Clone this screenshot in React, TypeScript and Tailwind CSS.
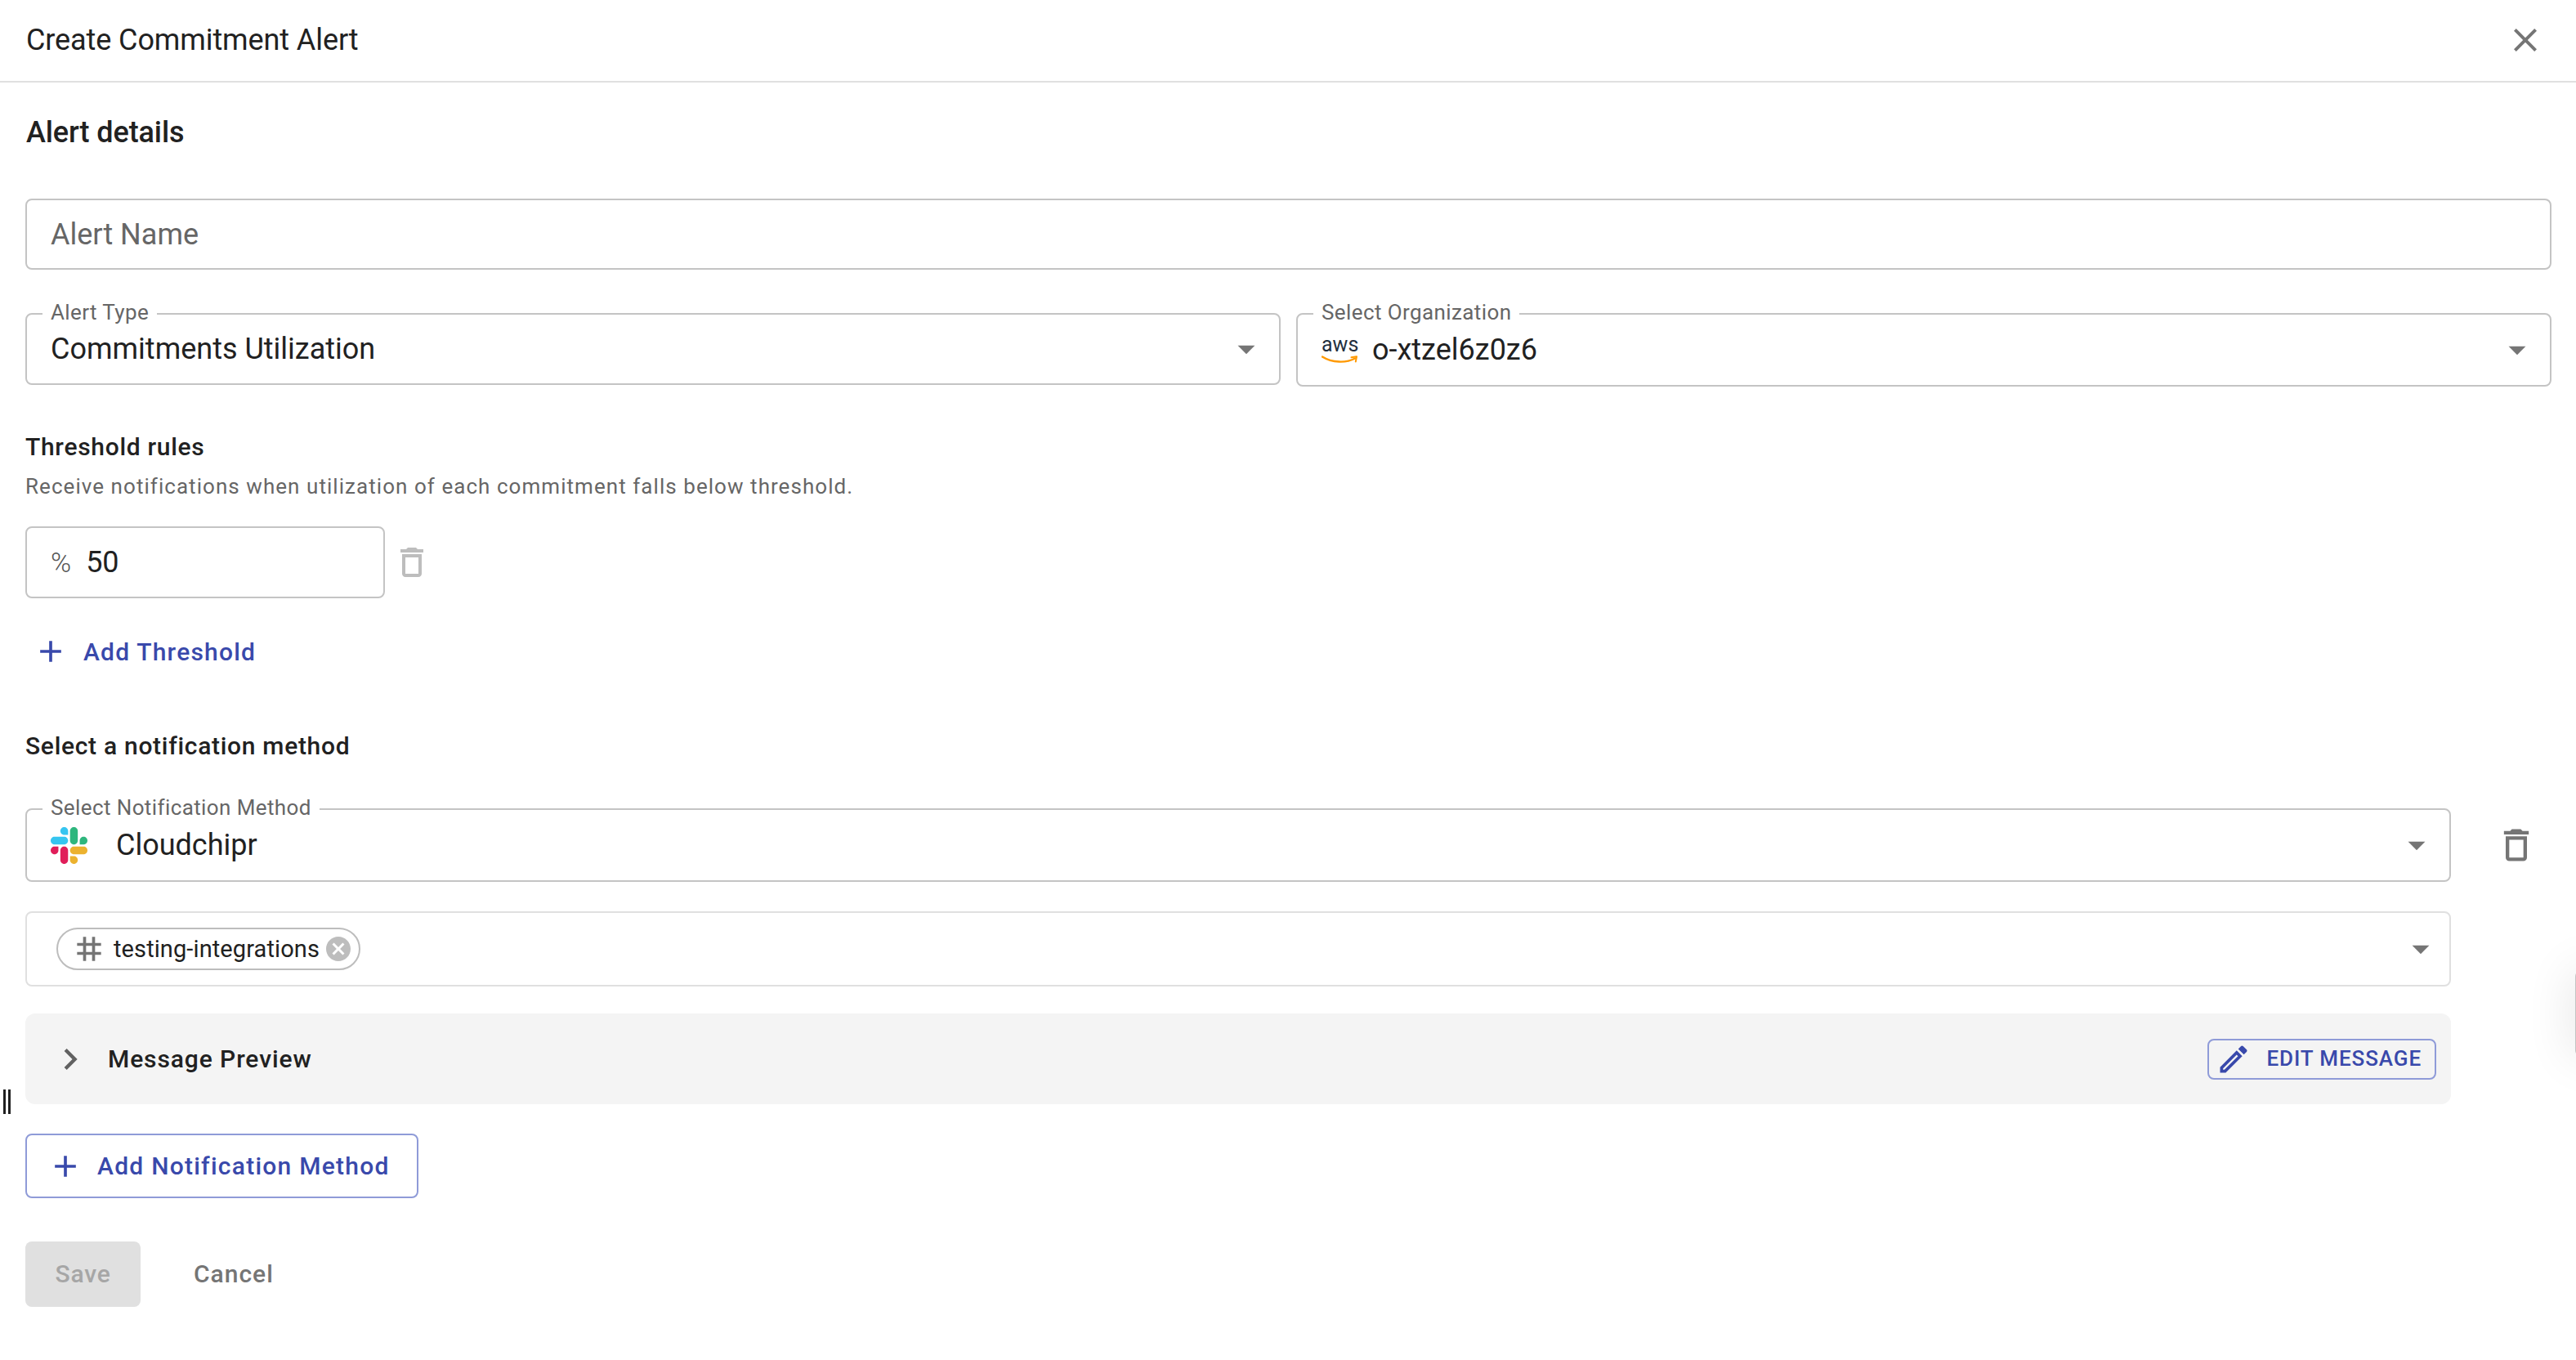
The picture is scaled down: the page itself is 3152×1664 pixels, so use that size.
import type { ReactNode } from 'react';

const icons = {
  close: 'M19 6.41 17.59 5 12 10.59 6.41 5 5 6.41 10.59 12 5 17.59 6.41 19 12 13.41 17.59 19 19 17.59 13.41 12z',
  trash: 'M6 19c0 1.1.9 2 2 2h8c1.1 0 2-.9 2-2V7H6v12zM8 9h8v10H8V9zm7.5-5-1-1h-5l-1 1H5v2h14V4h-3.5z',
  drop: 'm7 10 5 5 5-5z',
  add: 'M19 13h-6v6h-2v-6H5v-2h6V5h2v6h6v2z',
  edit: 'M3 17.25V21h3.75L17.81 9.94l-3.75-3.75L3 17.25zM5.92 19H5v-.92l9.06-9.06.92.92L5.92 19zM20.71 5.63l-2.34-2.34c-.2-.2-.45-.29-.71-.29s-.51.1-.7.29l-1.83 1.83 3.75 3.75 1.83-1.83c.39-.39.39-1.02 0-1.41z',
  chevron: 'M10 6 8.59 7.41 13.17 12l-4.58 4.59L10 18l6-6z',
  tag: 'M20 10V8h-4V4h-2v4h-4V4H8v4H4v2h4v4H4v2h4v4h2v-4h4v4h2v-4h4v-2h-4v-4h4zm-6 4h-4v-4h4v4z',
  cancel: 'M12 2C6.47 2 2 6.47 2 12s4.47 10 10 10 10-4.47 10-10S17.53 2 12 2zm5 13.59L15.59 17 12 13.41 8.41 17 7 15.59 10.59 12 7 8.41 8.41 7 12 10.59 15.59 7 17 8.41 13.41 12 17 15.59z',
};

function Icon({ name, className }: { name: keyof typeof icons; className: string }) {
  return (
    <svg viewBox="0 0 24 24" fill="currentColor" className={className}>
      <path d={icons[name]} />
    </svg>
  );
}

function SlackLogo() {
  return (
    <svg viewBox="0 0 122.8 122.8" className="w-[45px] h-[45px] shrink-0">
      <path d="M25.8 77.6c0 7.1-5.8 12.9-12.9 12.9S0 84.7 0 77.6s5.8-12.9 12.9-12.9h12.9v12.9z" fill="#e01e5a" />
      <path d="M32.3 77.6c0-7.1 5.8-12.9 12.9-12.9s12.9 5.8 12.9 12.9v32.3c0 7.1-5.8 12.9-12.9 12.9s-12.9-5.8-12.9-12.9V77.6z" fill="#e01e5a" />
      <path d="M45.2 25.8c-7.1 0-12.9-5.8-12.9-12.9S38.1 0 45.2 0s12.9 5.8 12.9 12.9v12.9H45.2z" fill="#36c5f0" />
      <path d="M45.2 32.3c7.1 0 12.9 5.8 12.9 12.9s-5.8 12.9-12.9 12.9H12.9C5.8 58.1 0 52.3 0 45.2s5.8-12.9 12.9-12.9h32.3z" fill="#36c5f0" />
      <path d="M97 45.2c0-7.1 5.8-12.9 12.9-12.9s12.9 5.8 12.9 12.9-5.8 12.9-12.9 12.9H97V45.2z" fill="#2eb67d" />
      <path d="M90.5 45.2c0 7.1-5.8 12.9-12.9 12.9s-12.9-5.8-12.9-12.9V12.9C64.7 5.8 70.5 0 77.6 0s12.9 5.8 12.9 12.9v32.3z" fill="#2eb67d" />
      <path d="M77.6 97c7.1 0 12.9 5.8 12.9 12.9s-5.8 12.9-12.9 12.9-12.9-5.8-12.9-12.9V97h12.9z" fill="#ecb22e" />
      <path d="M77.6 90.5c-7.1 0-12.9-5.8-12.9-12.9s5.8-12.9 12.9-12.9h32.3c7.1 0 12.9 5.8 12.9 12.9s-5.8 12.9-12.9 12.9H77.6z" fill="#ecb22e" />
    </svg>
  );
}

function AwsLogo() {
  return (
    <div className="relative w-[44px] h-[30px] shrink-0">
      <span className="absolute left-0 top-[-6px] text-[25px] leading-[30px] font-normal text-[#232f3e]">aws</span>
      <svg viewBox="0 0 44 12" className="absolute left-0 bottom-[-3px] w-[44px] h-[12px]" fill="none">
        <path d="M1 2.5C13 10 30 10.5 41 4.5" stroke="#f90" strokeWidth="2.4" strokeLinecap="round" />
        <path d="M36.5 3.2L43 2.2 41.8 8.5" stroke="#f90" strokeWidth="2" strokeLinecap="round" strokeLinejoin="round" />
      </svg>
    </div>
  );
}

function OutlinedSelect({
  label,
  value,
  className,
  arrowClass = 'right-[15px]',
}: {
  label: string;
  value: ReactNode;
  className: string;
  arrowClass?: string;
}) {
  return (
    <div className={`relative flex items-center border-2 border-[#c4c4c4] rounded-[8px] pl-[29px] bg-white ${className}`}>
      <span className="absolute left-[19px] top-[-17px] bg-white px-[10px] text-[26px] leading-[28px] tracking-[0.4px] text-[#666666]">
        {label}
      </span>
      {value}
      <Icon name="drop" className={`absolute top-1/2 -translate-y-1/2 w-[50px] h-[50px] text-[#757575] ${arrowClass}`} />
    </div>
  );
}

export default function App() {
  return (
    <div className="relative w-[3152px] h-[1664px] overflow-hidden bg-white text-[#212121] font-['Roboto',sans-serif]">
      {/* dialog header */}
      <header className="flex items-center justify-between h-[101px] border-b-2 border-[#e0e0e0] pl-[32px] pr-[38px] pb-[2px]">
        <h1 className="text-[36px] leading-[48px] font-normal tracking-[-0.1px]">Create Commitment Alert</h1>
        <Icon name="close" className="w-[48px] h-[48px] text-[#757575]" />
      </header>

      <main className="pl-[31px] pr-[30px]">
        <h2 className="mt-[38px] ml-[1px] text-[36px] leading-[46px] font-medium tracking-[-0.1px]">Alert details</h2>

        <div className="mt-[58px] flex items-center h-[87px] border-2 border-[#c4c4c4] rounded-[8px] pl-[29px] text-[36px] text-[#666666]">
          Alert Name
        </div>

        <div className="mt-[53px] flex gap-[19px] items-start">
          <OutlinedSelect
            label="Alert Type"
            className="flex-1 h-[88px]"
            value={<span className="text-[36px]">Commitments Utilization</span>}
          />
          <OutlinedSelect
            label="Select Organization"
            className="flex-1 h-[90px]"
            value={
              <div className="flex items-center gap-[18px]">
                <AwsLogo />
                <span className="text-[36px]">o-xtzel6z0z6</span>
              </div>
            }
          />
        </div>

        <h3 className="mt-[55px] text-[30px] leading-[38px] font-medium tracking-[0.7px]">Threshold rules</h3>
        <p className="mt-[11px] text-[26px] leading-[36px] tracking-[1.05px] text-[#666666]">
          Receive notifications when utilization of each commitment falls below threshold.
        </p>

        <div className="mt-[31px] flex items-center gap-[9px]">
          <div className="flex items-center w-[440px] h-[88px] border-2 border-[#c4c4c4] rounded-[8px] pl-[29px] gap-[18px]">
            <span className="text-[34px] font-light text-[#555555]">%</span>
            <span className="text-[36px]">50</span>
          </div>
          <Icon name="trash" className="w-[48px] h-[48px] text-[#bdbdbd]" />
        </div>

        <button className="mt-[42px] flex items-center gap-[18px] pl-[9px] h-[46px] text-[#3949ab] text-[30px] font-medium tracking-[1.2px]">
          <Icon name="add" className="w-[44px] h-[44px]" />
          Add Threshold
        </button>

        <h3 className="mt-[74px] text-[30px] leading-[38px] font-medium tracking-[0.7px]">Select a notification method</h3>

        <div className="mt-[57px] flex items-center">
          <OutlinedSelect
            label="Select Notification Method"
            className="w-[2968px] h-[90px]"
            value={
              <div className="flex items-center gap-[35px]">
                <SlackLogo />
                <span className="text-[36px]">Cloudchipr</span>
              </div>
            }
          />
          <Icon name="trash" className="ml-[54px] w-[52px] h-[52px] text-[#757575]" />
        </div>

        <div className="relative mt-[36px] flex items-center w-[2968px] h-[92px] border-2 border-[#e0e0e0] rounded-[8px] pl-[36px]">
          <div className="flex items-center h-[52px] border-2 border-[#bdbdbd] rounded-full pl-[16px] pr-[7px]">
            <Icon name="tag" className="w-[44px] h-[44px] text-[#757575]" />
            <span className="ml-[8px] text-[29px] leading-[40px] tracking-[0.1px]">testing-integrations</span>
            <Icon name="cancel" className="ml-[5px] w-[36px] h-[36px] text-[#bdbdbd]" />
          </div>
          <Icon name="drop" className="absolute right-[10px] top-1/2 -translate-y-1/2 w-[50px] h-[50px] text-[#757575]" />
        </div>

        <div className="mt-[33px] flex items-center justify-between w-[2968px] h-[111px] bg-[#f4f4f4] rounded-[12px] pl-[29px] pr-[18px]">
          <div className="flex items-center gap-[20px]">
            <Icon name="chevron" className="w-[52px] h-[52px] text-[#616161]" />
            <span className="text-[30px] font-medium tracking-[0.9px]">Message Preview</span>
          </div>
          <button className="flex items-center h-[50px] border-2 border-[#8f9bd8] rounded-[8px] pl-[8px] pr-[16px] gap-[18px] text-[#3949ab] text-[26px] font-medium tracking-[0.9px]">
            <Icon name="edit" className="w-[44px] h-[44px]" />
            EDIT MESSAGE
          </button>
        </div>

        <button className="mt-[36px] flex items-center h-[79px] w-[481px] border-2 border-[#8f9bd8] rounded-[8px] pl-[25px] gap-[17px] text-[#3949ab] text-[30px] font-medium tracking-[1.25px]">
          <Icon name="add" className="w-[44px] h-[44px]" />
          Add Notification Method
        </button>

        <div className="mt-[53px] flex items-center gap-[65px]">
          <button className="w-[141px] h-[80px] pb-[2px] rounded-[8px] bg-[#e0e0e0] text-[#a6a6a6] text-[30px] font-medium tracking-[0.8px]">
            Save
          </button>
          <button className="pb-[2px] text-[#757575] text-[30px] font-medium tracking-[1px]">Cancel</button>
        </div>
      </main>

      {/* resize handle poking out on the left */}
      <div className="absolute left-[4px] top-[1333px] flex gap-[3px] h-[30px]">
        <div className="w-[3px] bg-[#212121]" />
        <div className="w-[3px] bg-[#212121]" />
      </div>
      {/* edge of a floating widget at the right */}
      <div className="absolute left-[3151px] top-[1187px] w-[40px] h-[106px] rounded-[8px] bg-[#c4c4c4] shadow-[0_0_60px_rgba(0,0,0,0.12)]" />
    </div>
  );
}
